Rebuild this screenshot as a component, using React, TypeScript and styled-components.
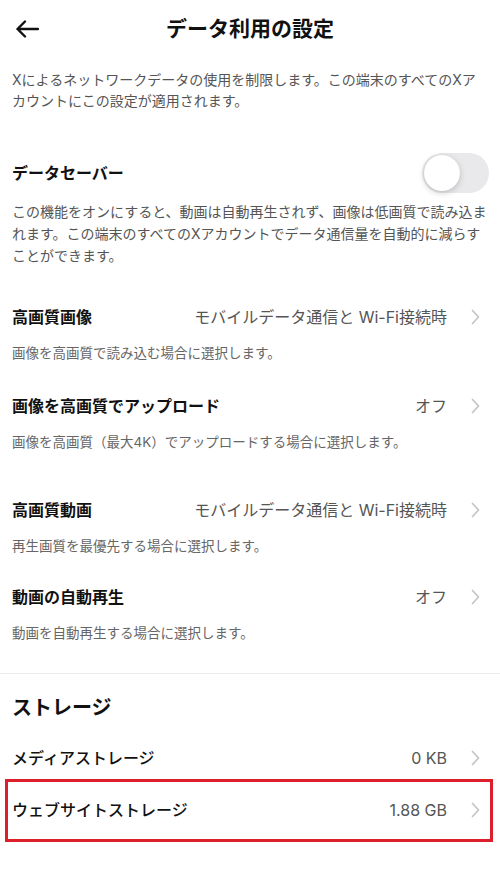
import styled, { createGlobalStyle } from 'styled-components';

const GlobalStyle = createGlobalStyle`
  body {
    margin: 0;
    background: #ffffff;
    font-family: Inter, 'Noto Sans CJK JP', 'Noto Sans', sans-serif;
    color: #111111;
  }
`;

interface Setting {
  title: string;
  value: string;
  note: string;
  gap: number;
}

const settings: Setting[] = [
  {
    title: '高画質画像',
    value: 'モバイルデータ通信と Wi-Fi接続時',
    note: '画像を高画質で読み込む場合に選択します。',
    gap: 38,
  },
  {
    title: '画像を高画質でアップロード',
    value: 'オフ',
    note: '画像を高画質（最大4K）でアップロードする場合に選択します。',
    gap: 31,
  },
  {
    title: '高画質動画',
    value: 'モバイルデータ通信と Wi-Fi接続時',
    note: '再生画質を最優先する場合に選択します。',
    gap: 46,
  },
  {
    title: '動画の自動再生',
    value: 'オフ',
    note: '動画を自動再生する場合に選択します。',
    gap: 29,
  },
];

const storage = [
  { title: 'メディアストレージ', value: '0 KB', highlighted: false },
  { title: 'ウェブサイトストレージ', value: '1.88 GB', highlighted: true },
];

const BackArrow = () => (
  <svg width="24" height="18" viewBox="0 0 24 18" fill="none">
    <path
      d="M23 9H2.5M10 1.5L2.5 9L10 16.5"
      stroke="#111"
      strokeWidth="2.4"
      strokeLinecap="round"
      strokeLinejoin="round"
    />
  </svg>
);

const Chevron = () => (
  <ChevronIcon width="9" height="16" viewBox="0 0 9 16" fill="none">
    <path
      d="M1.5 1.5L7.5 8L1.5 14.5"
      stroke="#c4c4c7"
      strokeWidth="1.7"
      strokeLinecap="round"
      strokeLinejoin="round"
    />
  </ChevronIcon>
);

const App = () => {
  return (
    <Page>
      <GlobalStyle />
      <Header>
        <BackButton aria-label="戻る">
          <BackArrow />
        </BackButton>
        <Title>データ利用の設定</Title>
        <span />
      </Header>

      <Intro>
        Xによるネットワークデータの使用を制限します。この端末のすべてのXア
        <br />
        カウントにこの設定が適用されます。
      </Intro>

      <SaverRow>
        <RowTitle>データセーバー</RowTitle>
        <Toggle>
          <Knob />
        </Toggle>
      </SaverRow>
      <SaverNote>
        この機能をオンにすると、動画は自動再生されず、画像は低画質で読み込ま
        <br />
        れます。この端末のすべてのXアカウントでデータ通信量を自動的に減らす
        <br />
        ことができます。
      </SaverNote>

      {settings.map(item => (
        <SettingItem key={item.title} $gap={item.gap}>
          <SettingRow>
            <RowTitle>{item.title}</RowTitle>
            <Value>{item.value}</Value>
            <Chevron />
          </SettingRow>
          <Note>{item.note}</Note>
        </SettingItem>
      ))}

      <Divider />

      <SectionTitle>ストレージ</SectionTitle>
      <StorageList>
        {storage.map(item => (
          <StorageRow key={item.title} $highlighted={item.highlighted}>
            <StorageTitle>{item.title}</StorageTitle>
            <Value>{item.value}</Value>
            <Chevron />
          </StorageRow>
        ))}
      </StorageList>
    </Page>
  );
};

const Page = styled.div`
  width: 500px;
  min-height: 876px;
  background: #ffffff;
`;

const Header = styled.header`
  display: grid;
  grid-template-columns: 60px 1fr 60px;
  align-items: center;
  height: 58px;
`;

const BackButton = styled.button`
  display: flex;
  align-items: center;
  padding: 0 0 0 15px;
  border: none;
  background: none;
  height: 58px;
`;

const Title = styled.h1`
  margin: 0;
  text-align: center;
  font-size: 21px;
  line-height: 30px;
  font-weight: 700;
  color: #111111;
`;

const Intro = styled.p`
  margin: 11px 0 0;
  padding: 0 12px;
  font-size: 14px;
  line-height: 21px;
  color: #555555;
`;

const SaverRow = styled.div`
  display: flex;
  align-items: center;
  justify-content: space-between;
  height: 40px;
  margin-top: 42px;
  padding: 0 11px 0 12px;
`;

const Toggle = styled.div`
  display: flex;
  align-items: center;
  box-sizing: border-box;
  width: 67px;
  height: 40px;
  padding: 2px;
  border-radius: 20px;
  background: #e9e9eb;
`;

const Knob = styled.div`
  width: 36px;
  height: 36px;
  border-radius: 50%;
  background: #ffffff;
  box-shadow: 0 2px 6px rgba(0, 0, 0, 0.18), 0 0 1px rgba(0, 0, 0, 0.12);
`;

const SaverNote = styled.p`
  margin: 8px 0 0;
  padding: 0 12px;
  font-size: 14px;
  line-height: 22px;
  color: #555555;
`;

const SettingItem = styled.div<{ $gap: number }>`
  display: flex;
  flex-direction: column;
  gap: 14px;
  margin-top: ${p => p.$gap}px;
  padding: 0 20px 0 12px;
`;

const SettingRow = styled.div`
  display: flex;
  align-items: center;
  height: 24px;
`;

const RowTitle = styled.span`
  flex: 1;
  font-size: 16px;
  line-height: 24px;
  font-weight: 700;
  color: #111111;
  white-space: nowrap;
`;

const Value = styled.span`
  font-size: 16px;
  line-height: 24px;
  color: #555555;
  white-space: nowrap;
`;

const ChevronIcon = styled.svg`
  flex: none;
  margin-left: 24px;
`;

const Note = styled.p`
  margin: 0;
  font-size: 13.5px;
  line-height: 20px;
  color: #666666;
`;

const Divider = styled.hr`
  margin: 30px 0 0;
  height: 1px;
  border: none;
  background: #ececec;
`;

const SectionTitle = styled.h2`
  margin: 20px 0 0;
  padding: 0 12px;
  font-size: 20px;
  line-height: 28px;
  font-weight: 700;
  color: #111111;
`;

const StorageList = styled.div`
  display: flex;
  flex-direction: column;
  margin-top: 14px;
`;

const StorageRow = styled.div<{ $highlighted: boolean }>`
  display: flex;
  align-items: center;
  box-sizing: border-box;
  height: ${p => (p.$highlighted ? 63 : 43)}px;
  margin: ${p => (p.$highlighted ? '0 7px 0 5px' : '0')};
  padding: ${p => (p.$highlighted ? '0 10px 2px 4px' : '0 20px 0 12px')};
  border: ${p => (p.$highlighted ? '3px solid #dc1f2b' : 'none')};
`;

const StorageTitle = styled.span`
  flex: 1;
  font-size: 16px;
  line-height: 24px;
  font-weight: 500;
  color: #111111;
  white-space: nowrap;
`;

export default App;
